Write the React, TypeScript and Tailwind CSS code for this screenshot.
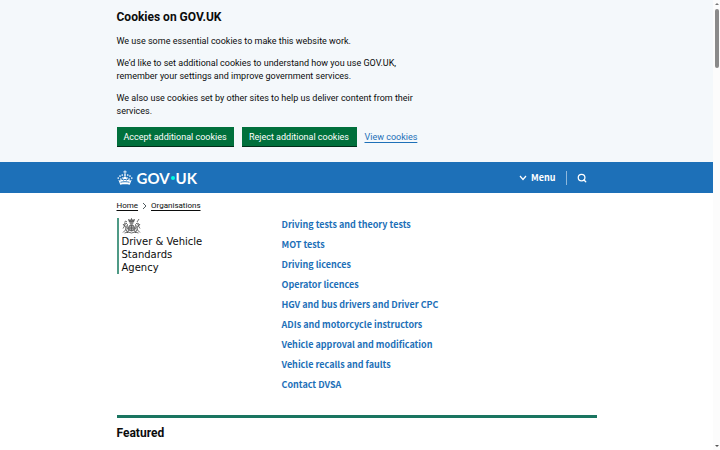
import { Search } from "lucide-react";

const topics = [
  "Driving tests and theory tests",
  "MOT tests",
  "Driving licences",
  "Operator licences",
  "HGV and bus drivers and Driver CPC",
  "ADIs and motorcycle instructors",
  "Vehicle approval and modification",
  "Vehicle recalls and faults",
  "Contact DVSA",
];

const container = "mx-auto w-full max-w-[480px]";

function Crown() {
  return (
    <svg viewBox="0 0 32 30" className="h-4 w-4" fill="currentColor" aria-hidden="true">
      <path d="M14.800 0h2.400l-.6 2 2.400-.6v2.400l-2.400-.5.9 3.200h-3l.9-3.200-2.400.5V1.400l2.400.6z" />
      <circle cx="16" cy="9" r="1.900" />
      <circle cx="10.500" cy="9" r="1.700" />
      <circle cx="21.500" cy="9" r="1.700" />
      <circle cx="6" cy="11" r="1.700" />
      <circle cx="26" cy="11" r="1.700" />
      <circle cx="2.500" cy="15" r="1.700" />
      <circle cx="29.500" cy="15" r="1.700" />
      <path d="M2.500 18l4 10.500c6.300-1.300 12.700-1.300 19 0l4-10.500c-1.500 2-3.500 2.500-4.500 1.500.6-2 .2-3.800-.8-5-1.200 1.600-1.700 3-1.400 4.600-2 .4-3.600-.8-3.800-2.600 1 .2 1.600.2 2.400-.3v-2.700c-1 0-1.700.2-2.300.9L17.500 12h-3l-1.600 2.400c-.6-.7-1.300-.9-2.300-.9v2.700c.8.500 1.400.5 2.400.3-.2 1.800-1.800 3-3.800 2.600.3-1.600-.2-3-1.400-4.600-1 1.200-1.400 3-.8 5-1 1-3 .5-4.500-1.500z" />
      <path d="M7 23.500c6-1.500 12-1.500 18 0M12 19.500l4-2 4 2" fill="none" stroke="#1d70b8" strokeWidth="1.800" />
    </svg>
  );
}

function Crest() {
  return (
    <svg viewBox="1 0 36 32" className="h-4 w-[19px]" fill="none" stroke="#4a4a4a" strokeWidth="1.600" aria-hidden="true">
      <path d="M15 8l-2-5 4 2 2-4 2 4 4-2-2 5z" fill="#777" />
      <path d="M15 10h8M16 12h6" />
      <circle cx="19" cy="20" r="6" fill="#aaa" />
      <path d="M19 14v12M13 20h12" strokeWidth="1.300" />
      <path d="M11 30l2-6-3-5 1-6-3-3-4 2 1 4 3 2-1 6-5 5M2 21l3-5-3-4M8 23l3 6M5 9l2-3 3 2" />
      <path d="M27 30l-2-6 3-5-1-6 3-3 4 2-1 4-3 2 1 6 5 5M36 21l-3-5 3-4M30 23l-3 6M30 8l4-6" />
      <path d="M5 30q7-4 14 0 7-4 14 0" />
      <path d="M6 11l5 9M32 11l-5 9M8 18v8M30 18v8" stroke="#888" />
    </svg>
  );
}

export default function App() {
  return (
    <div className="flex h-screen overflow-hidden bg-white font-['Roboto',sans-serif] text-[9px] leading-[13px] text-[#0b0c0c]">
      <div className="min-w-0 flex-1">
        <section aria-label="Cookies on GOV.UK" className="bg-[#f4f8fb] pt-[9px] pb-[15px]">
          <div className={container}>
            <h2 className="mb-[10px] text-xs leading-4 font-bold">Cookies on GOV.UK</h2>
            <div className="flex max-w-[310px] flex-col gap-[9px]">
              <p>We use some essential cookies to make this website work.</p>
              <p>We’d like to set additional cookies to understand how you use GOV.UK, remember your settings and improve government services.</p>
              <p>We also use cookies set by other sites to help us deliver content from their services.</p>
            </div>
            <div className="mt-[9px] flex items-center gap-2">
              <button className="h-5 w-[117px] border-b border-[#002d18] bg-[#00703c] pt-px whitespace-nowrap text-white">Accept additional cookies</button>
              <button className="h-5 w-[115px] border-b border-[#002d18] bg-[#00703c] pt-px whitespace-nowrap text-white">Reject additional cookies</button>
              <a href="#cookies" className="text-[#1d70b8] underline underline-offset-2">View cookies</a>
            </div>
          </div>
        </section>

        <header className="bg-[#1d70b8] text-white">
          <div className={container + " flex h-[31px] items-center justify-between"}>
            <a href="#home" aria-label="GOV.UK" className="flex items-center gap-1">
              <Crown />
              <span className="flex items-center font-['Lato',sans-serif] text-[15px] leading-5 font-bold">
                GOV
                <span className="mx-px h-1 w-1 rounded-full bg-[#00ffe0]" />
                UK
              </span>
            </a>
            <div className="flex items-center pr-[10px]">
              <button className="flex items-center gap-1 pr-[10px] font-['Noto_Sans_CJK_SC',sans-serif] text-[9px] font-bold">
                <svg viewBox="0 0 8 6" className="h-[6px] w-2" fill="none" stroke="currentColor" strokeWidth="1.200" aria-hidden="true"><path d="M1 1l3 3.500L7 1" /></svg>
                Menu
              </button>
              <button aria-label="Search" className="border-l border-[#8eb8dc] py-[2px] pl-[10px]">
                <Search className="size-[10px]" strokeWidth={3} />
              </button>
            </div>
          </div>
        </header>

        <main className={container}>
          <nav aria-label="Breadcrumb" className="flex items-center gap-1 pt-[6px] text-[8px] leading-[13px]">
            <a href="#home" className="underline underline-offset-2">Home</a>
            <svg viewBox="0 0 5 8" className="h-2 w-[5px]" fill="none" stroke="#505a5f" aria-hidden="true"><path d="M1 1l3 3-3 3" /></svg>
            <a href="#organisations" className="underline underline-offset-2">Organisations</a>
          </nav>

          <div className="mt-[6px] grid grid-cols-[165px_1fr] items-start">
            <div className="border-l-2 border-[#4f9a86] pl-[3px]">
              <Crest />
              <h1 className="mt-px max-w-[90px] font-['DejaVu_Sans',sans-serif] text-[10px] leading-[13px]">Driver &amp; Vehicle Standards Agency</h1>
            </div>
            <ul className="flex flex-col gap-[7px] font-['Noto_Sans_CJK_SC',sans-serif] font-bold text-[#1d70b8]">
              {topics.map((topic) => (
                <li key={topic}>
                  <a href="#topic">{topic}</a>
                </li>
              ))}
            </ul>
          </div>

          <section className="mt-[24px] border-t-[3px] border-[#1a7560] pt-[7px]">
            <h2 className="text-xs leading-4 font-bold">Featured</h2>
          </section>
        </main>
      </div>

      <div aria-hidden="true" className="flex w-[7px] flex-col items-center justify-between bg-[#fcfcfc] py-[3px]">
        <div className="flex flex-col items-center gap-1">
          <svg viewBox="0 0 4 2" className="h-[2px] w-1"><path d="M0 2l2-2 2 2z" fill="#777" /></svg>
          <div className="h-[59px] w-1 rounded-full bg-[#8a8a8a]" />
        </div>
        <svg viewBox="0 0 4 2" className="h-[2px] w-1"><path d="M0 0l2 2 2-2z" fill="#555" /></svg>
      </div>
    </div>
  );
}
